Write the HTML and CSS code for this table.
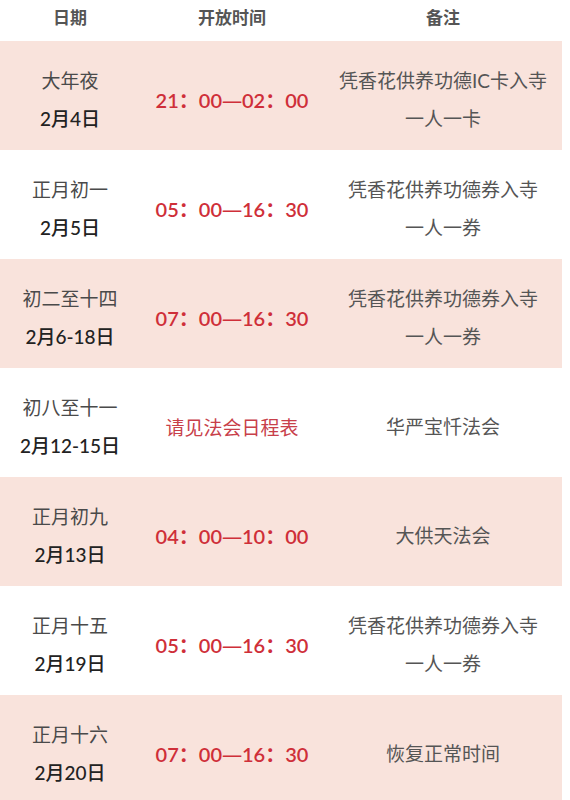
FILE: index.html
```html
<!DOCTYPE html>
<html lang="zh-CN">
<head>
<meta charset="utf-8">
<link rel="stylesheet" href="styles.css">
</head>
<body>
<div class="table">
  <div class="head">
    <div class="cell">日期</div>
    <div class="cell">开放时间</div>
    <div class="cell">备注</div>
  </div>
  <div class="row pink">
    <div class="cell date"><div class="d1">大年夜</div><div class="d2">2月4日</div></div>
    <div class="cell time">21：00<span class="dash">—</span>02：00</div>
    <div class="cell note"><div>凭香花供养功德IC卡入寺</div><div>一人一卡</div></div>
  </div>
  <div class="row">
    <div class="cell date"><div class="d1">正月初一</div><div class="d2">2月5日</div></div>
    <div class="cell time">05：00<span class="dash">—</span>16：30</div>
    <div class="cell note"><div>凭香花供养功德券入寺</div><div>一人一券</div></div>
  </div>
  <div class="row pink">
    <div class="cell date"><div class="d1">初二至十四</div><div class="d2">2月6-18日</div></div>
    <div class="cell time">07：00<span class="dash">—</span>16：30</div>
    <div class="cell note"><div>凭香花供养功德券入寺</div><div>一人一券</div></div>
  </div>
  <div class="row">
    <div class="cell date"><div class="d1">初八至十一</div><div class="d2">2月12-15日</div></div>
    <div class="cell time soft">请见法会日程表</div>
    <div class="cell note"><div>华严宝忏法会</div></div>
  </div>
  <div class="row pink">
    <div class="cell date"><div class="d1">正月初九</div><div class="d2">2月13日</div></div>
    <div class="cell time">04：00<span class="dash">—</span>10：00</div>
    <div class="cell note"><div>大供天法会</div></div>
  </div>
  <div class="row">
    <div class="cell date"><div class="d1">正月十五</div><div class="d2">2月19日</div></div>
    <div class="cell time">05：00<span class="dash">—</span>16：30</div>
    <div class="cell note"><div>凭香花供养功德券入寺</div><div>一人一券</div></div>
  </div>
  <div class="row pink">
    <div class="cell date"><div class="d1">正月十六</div><div class="d2">2月20日</div></div>
    <div class="cell time">07：00<span class="dash">—</span>16：30</div>
    <div class="cell note"><div>恢复正常时间</div></div>
  </div>
</div>
</body>
</html>
```
FILE: styles.css
```css
html, body {
  margin: 0;
  padding: 0;
  background: #ffffff;
}
body {
  font-family: "Lato", "Noto Sans CJK SC", sans-serif;
  color: #444;
}
.table {
  width: 562px;
}
.head, .row {
  display: grid;
  grid-template-columns: 140px 184px 238px;
  align-items: center;
}
.head {
  height: 41px;
  font-size: 17px;
  font-weight: 700;
  color: #555;
  padding-bottom: 9px;
  box-sizing: border-box;
}
.row {
  height: 109px;
  box-sizing: border-box;
  padding-top: 8px;
}
.pink {
  background: #f9e3dc;
}
.cell {
  text-align: center;
}
.date, .note {
  font-size: 19px;
  line-height: 38px;
}
.d1 {
  color: #4a4a4a;
}
.d2 {
  color: #222;
  font-weight: 500;
}
.note {
  color: #555;
}
.time {
  font-size: 20px;
  font-weight: 600;
  color: #cf2f39;
  padding-top: 0;
}
.dash {
  display: inline-block;
  font-family: "Noto Sans CJK SC", sans-serif;
  font-weight: 500;
  transform: scaleX(1.15);
  margin: 0 1px;
}
.time.soft {
  font-size: 19px;
  font-weight: 400;
  color: #c8404a;
}
```
